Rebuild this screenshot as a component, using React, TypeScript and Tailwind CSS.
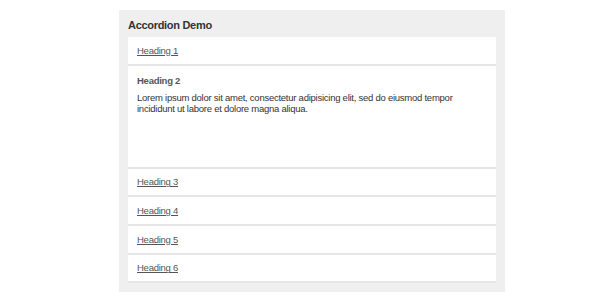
const headings = ["Heading 1", "Heading 2", "Heading 3", "Heading 4", "Heading 5", "Heading 6"];

export default function App() {
  const open = 1;
  return (
    <div className="h-[300px] w-[600px] bg-white font-['Liberation_Sans',Arial,sans-serif]">
      <div className="ml-[119px] pt-[10px]">
        <div className="w-[386px] bg-[#efefef] px-[9px] pb-[9px]">
          <h2 className="flex h-[27px] items-center pt-[3px] text-[11px] font-bold tracking-[-0.3px] text-[#333]">Accordion Demo</h2>
          <div className="bg-white">
            {headings.map((h, i) =>
              i === open ? (
                <div key={h} className="h-[103px] border-b-2 border-[#e6e6e6] px-[9px] pt-[8px]">
                  <div className="text-[9.5px] font-bold tracking-[-0.25px] text-[#555]">{h}</div>
                  <p className="mt-[4px] text-[9.5px] leading-[11px] tracking-[-0.25px] text-[#333]">
                    Lorem ipsum dolor sit amet, consectetur adipisicing elit, sed do eiusmod tempor incididunt ut labore et dolore magna aliqua.
                  </p>
                </div>
              ) : (
                <div key={h} className="flex h-[28.7px] items-center border-b-2 border-[#e6e6e6] px-[9px] pt-[1px]">
                  <a href="#" className="text-[9.5px] tracking-[-0.25px] text-[#555] underline">
                    {h}
                  </a>
                </div>
              )
            )}
          </div>
        </div>
      </div>
    </div>
  );
}
